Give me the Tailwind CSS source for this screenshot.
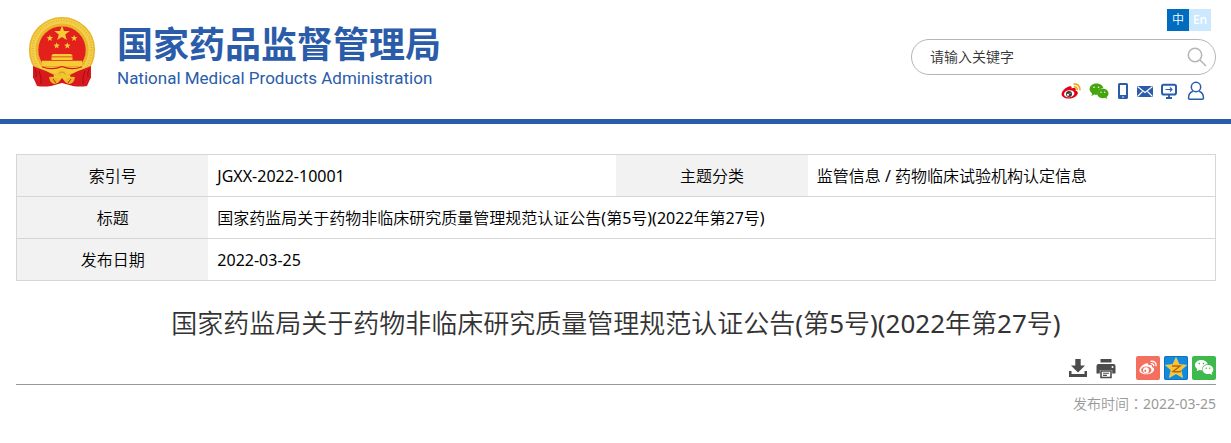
<!DOCTYPE html>
<html lang="zh-CN">
<head>
<meta charset="utf-8">
<meta name="viewport" content="width=device-width, initial-scale=1">
<title>国家药品监督管理局</title>
<script src="https://cdn.jsdelivr.net/npm/@tailwindcss/browser@4"></script>
</head>
<body class="bg-white font-['Noto_Sans','Noto_Sans_CJK_SC_DemiLight','Noto_Sans_CJK_SC',sans-serif] font-normal text-black">
<header class="flex justify-between border-b-5 border-[#2a5caa] pr-[15px] pl-7">
  <a href="#" class="flex items-start gap-[21px] pt-4 pb-[31px]">
    <svg class="h-[72px] w-[68px]" viewBox="-1 -1 68 72" role="img" aria-label="国徽">
      <path d="M6 48 33 56 60 48 62 60 58 69Q50 70 44 69L33 66 22 69Q14 70 8 69L4 60Z" fill="#d3161b"/>
      <circle cx="33" cy="33" r="28.300" fill="none" stroke="#e9b72c" stroke-width="9.600"/>
      <circle cx="33" cy="33" r="29" fill="none" stroke="#f4cf4c" stroke-width="5"/>
      <circle cx="33" cy="33" r="29.500" fill="none" stroke="#e6b433" stroke-width="2" stroke-dasharray="1 1.600"/>
      <circle cx="33" cy="33" r="23.800" fill="#e3201b"/>
      <g fill="#f5cc35">
        <path d="m33 8.500 2 5.500 5.700.1-4.500 3.500 1.600 5.500-4.800-3.200-4.800 3.200 1.600-5.500-4.500-3.500 5.700-.1Z"/>
        <path id="star" d="m33 9.500 1.500 4.300 4.500.1-3.600 2.800 1.300 4.400-3.700-2.600-3.700 2.600 1.300-4.400-3.600-2.800 4.500-.1Z" transform="translate(2.700 12.500) scale(.55)"/>
        <use href="#star" x="24.300"/>
        <use href="#star" x="6.800" y="7.500"/>
        <use href="#star" x="17.500" y="7.500"/>
        <path d="M24 37h18l1.500 1.500v1H22.500v-1ZM22.500 40.300h21V43h-21ZM13 43.800h40v5.700H13Z"/>
        <path d="M11 49.500h44Q49 56 43 56L33 59 23 56Q17 56 11 49.500Z"/>
      </g>
      <path d="M13 49.700q10 4 20-.2 10 4.200 20 .2" fill="none" stroke="#d3161b" stroke-width="1.200"/>
      <path d="M4 49 9 51 17 54 25 58 22 68 8 69Q9 62 4 61ZM62 49 57 51 49 54 41 58 44 68 58 69Q57 62 62 61Z" fill="#d8191d"/>
      <path d="M10 54q3 7 2 13M56 54q-3 7-2 13M6 52q2 4 1 8M60 52q-2 4-1 8" fill="none" stroke="#9e1015" stroke-width="1"/>
      <path d="M20 60q7-1 13 3 6-4 13-3-1 7-6 7l-7-3-7 3q-5 0-6-7Z" fill="#edb824"/>
      <path d="m24 62 3 4M42 62l-3 4" stroke="#d3161b" stroke-width="1"/>
      <circle cx="33" cy="58" r="6" fill="#f3c42e"/>
      <path d="M29.500 57q3.500-4 7 0" fill="none" stroke="#cc8f1c" stroke-width="1"/>
      <path d="m33 61 4 5h-8Z" fill="#d3161b"/>
    </svg>
    <span class="flex flex-col text-[#2a5caa]">
      <span class="font-['Noto_Sans_CJK_SC',sans-serif] text-[36px] leading-[52px] font-bold">国家药品监督管理局</span>
      <span class="font-['Roboto',sans-serif] text-[17px] leading-5">National Medical Products Administration</span>
    </span>
  </a>
  <div class="flex flex-col items-end pt-[9px]">
    <nav class="mr-[5px] flex text-center text-xs leading-[22px] font-medium text-white" aria-label="语言">
      <a href="#" class="w-[22px] bg-[#006cbf]">中</a>
      <a href="#" class="w-[22px] bg-[#cce8ff]">En</a>
    </nav>
    <form class="mt-2 flex h-9 w-[305px] items-center rounded-full border border-[#b5b5b5] pr-2 pl-[18px]">
      <input type="text" aria-label="请输入关键字" placeholder="请输入关键字" class="min-w-0 flex-1 text-sm outline-none placeholder:text-[#333]">
      <button type="button" aria-label="搜索">
        <svg class="h-5 w-5" viewBox="0 0 20 20" fill="none" stroke="#b5b5b5" stroke-width="1.500"><circle cx="8" cy="8" r="6.700"/><path d="m13 13 6 6"/></svg>
      </button>
    </form>
    <nav class="mt-[6px] mr-[11px] flex items-center" aria-label="快捷入口">
      <a href="#" aria-label="微博"><svg class="h-5 w-5" viewBox="0 0 20 20"><path d="M8 5.500C10 4.800 11 5.500 10.500 7.500 14 6.500 15.500 7.500 14.500 9.500 17.500 10.500 17.500 13 15 15.200 11 18.500 3 18.500.8 14.500-.5 11.500 4 6.500 8 5.500Z" fill="#e60012"/><ellipse cx="8.200" cy="12.800" rx="5.200" ry="3.500" transform="rotate(-8 8.200 12.800)" fill="#fff"/><circle cx="8" cy="12.900" r="3" fill="#3b3b3b"/><circle cx="7" cy="13.800" r="1.100" fill="#fff"/><circle cx="9" cy="12.200" r=".5" fill="#fff"/><path d="M12.500 3.200q6.500-.7 6.500 6M12.800 5.900q3.600-.3 3.500 3" fill="none" stroke="#f0a818" stroke-width="1.600"/></svg></a>
      <a href="#" class="ml-2" aria-label="微信"><svg class="h-5 w-5" viewBox="0 0 20 20"><path d="M7.300 2.500C3.300 2.500.6 5 .6 8.100c0 1.900 1 3.400 2.500 4.400L2.400 15l2.800-1.500q1.500.5 3.600.3C8 9.800 10.800 7.200 14.400 7.200 13.800 4.400 11 2.500 7.300 2.500Z" fill="#45a50c"/><path d="M13.800 7.800c-3.200 0-5.600 2-5.600 4.700s2.400 4.700 5.600 4.700q1.200 0 2.200-.4l2.200 1.200-.6-2c1.200-.9 1.900-2.100 1.900-3.500 0-2.700-2.500-4.700-5.700-4.700Z" fill="#45a50c"/><g fill="#fff"><circle cx="5" cy="6.300" r=".8"/><circle cx="9.500" cy="6.300" r=".8"/><circle cx="12" cy="11.200" r=".7"/><circle cx="15.700" cy="11.200" r=".7"/></g></svg></a>
      <a href="#" class="ml-2" aria-label="手机"><svg class="h-5 w-3" viewBox="0 0 12 20"><rect x="1" y="2" width="10" height="16" rx="1.600" fill="#2a5caa"/><path d="M3 4h6v10H3Z" fill="#fff"/><circle cx="6" cy="16" r=".8" fill="#fff"/></svg></a>
      <a href="#" class="ml-2" aria-label="邮件"><svg class="h-5 w-4" viewBox="0 0 16 20"><path d="M0 5h16v11H0Z" fill="#2a5caa"/><path d="m.5 5.500 7.500 6 7.500-6M.5 15.500l5-5M15.500 15.500l-5-5" fill="none" stroke="#fff" stroke-width="1.100"/></svg></a>
      <a href="#" class="ml-2" aria-label="网站"><svg class="h-5 w-4" viewBox="0 0 16 20" fill="none" stroke="#2a5caa"><rect x="1" y="3.800" width="14" height="9.700" rx="1.800" stroke-width="2"/><path d="M8 14v3M5 17h6" stroke-width="1.800"/><path d="M4.500 8.500h6.500M9 6.500l2 2-2 2" stroke-width="1.100"/></svg></a>
      <a href="#" class="ml-[10px]" aria-label="用户"><svg class="h-5 w-[18px]" viewBox="0 0 18 20" fill="none" stroke="#2a5caa" stroke-width="1.500"><circle cx="9" cy="6" r="4.700"/><path d="M5.800 10.300C2.800 11.500 1.500 14 1.500 17q0 1.200 1.200 1.200h12.600q1.200 0 1.200-1.200c0-3-1.300-5.500-4.300-6.700"/></svg></a>
    </nav>
  </div>
</header>
<main class="pt-[30px] pr-[15px] pl-4">
  <table class="w-full table-fixed border-collapse border border-[#d6d6d6] text-base leading-6">
    <colgroup><col class="w-[16%]"><col class="w-[34%]"><col class="w-[16%]"><col class="w-[34%]"></colgroup>
    <tbody>
      <tr class="h-[42px] border-b border-[#d6d6d6]"><th scope="row" class="bg-[#f2f2f2] font-normal">索引号</th><td class="px-[9px]">JGXX-2022-10001</td><th scope="row" class="bg-[#f2f2f2] font-normal">主题分类</th><td class="px-[9px]">监管信息 / 药物临床试验机构认定信息</td></tr>
      <tr class="h-[42px] border-b border-[#d6d6d6]"><th scope="row" class="bg-[#f2f2f2] font-normal">标题</th><td colspan="3" class="px-[9px]">国家药监局关于药物非临床研究质量管理规范认证公告(第5号)(2022年第27号)</td></tr>
      <tr class="h-[42px]"><th scope="row" class="bg-[#f2f2f2] font-normal">发布日期</th><td colspan="3" class="px-[9px]">2022-03-25</td></tr>
    </tbody>
  </table>
  <h1 class="mt-[22px] text-center text-[26px] leading-10 font-normal text-[#333]">国家药监局关于药物非临床研究质量管理规范认证公告(第5号)(2022年第27号)</h1>
  <div class="mt-[13px] flex items-center justify-end border-b border-[#999] pb-1">
    <button type="button" aria-label="下载"><svg class="h-6 w-5" viewBox="0 0 20 24" fill="#4c4c4c"><path d="M7.300 3h5.400v6.500H17l-7 7-7-7h4.300Z"/><path d="M1 15h2.500v3h13v-3H19v6H1Z"/></svg></button>
    <button type="button" class="ml-2" aria-label="打印"><svg class="h-6 w-5" viewBox="0 0 20 24" fill="#4c4c4c"><path d="M4.500 3h11v3.500h-11ZM2.500 8h15q2 0 2 2v7.500h-3.300V14H3.800v3.500H.5V10q0-2 2-2Z"/><path d="M5 15h10v6.500H5Z" fill="#fff" stroke="#4c4c4c" stroke-width="1.600"/><path d="M7 17.200h6M7 19.400h4" stroke="#4c4c4c" stroke-width="1.100"/><circle cx="16.500" cy="11" r="1" fill="#fff"/></svg></button>
    <a href="#" class="ml-5" aria-label="分享到微博"><svg class="h-6 w-6" viewBox="0 0 24 24"><rect width="24" height="24" rx="2" fill="#f56f60"/><path d="M10 7.500c1.800-.6 2.700.2 2.300 1.800 2.800-.8 4.300-.2 3.700 1.800 3 1 2.700 3.500.6 5.200-3.600 3-11.300 2.600-13-.8C2.600 12.800 6.400 8.500 10 7.500Z" fill="#fff"/><ellipse cx="10.300" cy="14" rx="5.200" ry="3.600" fill="#f56f60"/><circle cx="10" cy="14.200" r="2.900" fill="#fff"/><circle cx="9.300" cy="14.800" r="1.100" fill="#f56f60"/><path d="M14.500 5.300q6-.5 5.700 5M14.800 7.700q3.200-.2 3 2.600" fill="none" stroke="#fff" stroke-width="1.300"/></svg></a>
    <a href="#" class="ml-1" aria-label="分享到QQ空间"><svg class="h-6 w-6" viewBox="0 0 24 24"><rect width="24" height="24" rx="2" fill="#1589dc"/><rect x=".5" y=".5" width="23" height="23" rx="1.500" fill="none" stroke="#0875c8"/><path d="m12 1.500 3.100 7 7.400.7-5.600 4.900 1.700 7.400L12 17.700l-6.600 3.800 1.700-7.400L1.500 9.200l7.400-.7Z" fill="#fdc42c" stroke="#f2e36c" stroke-width=".6"/><path d="M8 10h8l-7 5.500q5 .8 8-.3" fill="none" stroke="#bc6611" stroke-width="1.500"/></svg></a>
    <a href="#" class="ml-1" aria-label="分享到微信"><svg class="h-6 w-6" viewBox="0 0 24 24"><rect width="24" height="24" rx="2" fill="#3eb94e"/><path d="M9.300 4C5.700 4 3 6.200 3 9.100c0 1.700.9 3.100 2.300 4L4.700 15.300l2.500-1.300q1.400.4 3 .3c-.6-3.600 2-6 5.600-6C15.200 5.700 12.700 4 9.300 4Z" fill="#fff"/><path d="M15.900 9c-3.100 0-5.400 2-5.400 4.500s2.300 4.500 5.400 4.500l2-.3 2.200 1.300-.5-2c1.100-.8 1.700-2.100 1.700-3.500C21.300 11 19 9 15.900 9Z" fill="#fff"/><g fill="#3eb94e"><circle cx="7.200" cy="7.600" r=".8"/><circle cx="11.500" cy="7.600" r=".8"/><circle cx="14.200" cy="12.200" r=".7"/><circle cx="17.700" cy="12.200" r=".7"/></g></svg></a>
  </div>
  <p class="mt-[6px] text-right text-sm leading-6 text-[#999]">发布时间<span lang="zh-TW" class="font-['Noto_Sans_CJK_TC',sans-serif]">：</span><time datetime="2022-03-25">2022-03-25</time></p>
</main>
</body>
</html>
